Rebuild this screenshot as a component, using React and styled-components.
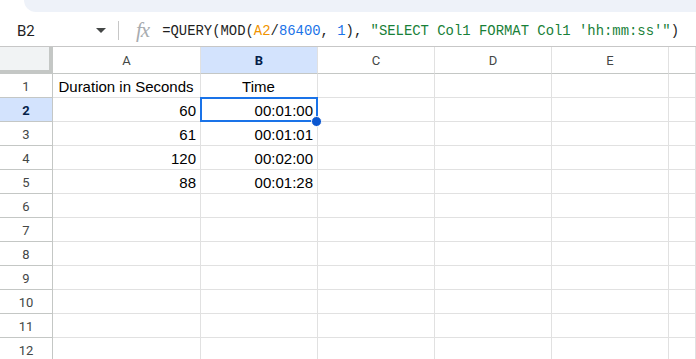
import React from "react";
import styled, { createGlobalStyle } from "styled-components";

const Global = createGlobalStyle`
  html, body { margin: 0; padding: 0; background: #fff; overflow: hidden; }
  * { box-sizing: border-box; }
`;

const Page = styled.div`
  width: 696px;
  height: 359px;
  display: flex;
  flex-direction: column;
  background: #fff;
  overflow: hidden;
  font-family: Roboto, "Liberation Sans", Arial, sans-serif;
`;

const ToolbarEdge = styled.div`
  height: 12px;
  margin-left: 24px;
  background: #eef2f9;
  border-bottom-left-radius: 14px;
  flex: none;
`;

const FormulaBar = styled.div`
  height: 35px;
  padding-top: 3px;
  display: flex;
  align-items: center;
  border-bottom: 1px solid #c7c7c7;
  flex: none;
`;

const NameBox = styled.div`
  width: 118px;
  display: flex;
  align-items: center;
  justify-content: space-between;
  padding: 0 12px 0 17px;
  font-size: 15px;
  color: #1f1f1f;
`;

const Caret = styled.span`
  width: 0;
  height: 0;
  border-left: 5px solid transparent;
  border-right: 5px solid transparent;
  border-top: 5px solid #444746;
`;

const Divider = styled.div`
  width: 1px;
  height: 19px;
  background: #c7c7c7;
  margin-right: 17px;
`;

const Fx = styled.span`
  font-family: "Liberation Serif", "DejaVu Serif", serif;
  font-style: italic;
  font-size: 21px;
  color: #a8acb0;
  margin-right: 13px;
  letter-spacing: -1px;
`;

const Formula = styled.div`
  font-family: "Liberation Mono", "DejaVu Sans Mono", monospace;
  font-size: 13.9px;
  color: #1f1f1f;
  white-space: pre;
`;

const Tok = styled.span`
  color: ${(p) => p.$c};
`;

const Grid = styled.div`
  display: grid;
  grid-template-columns: 53px 148px 117px 117px 117px 117px 1fr;
  grid-template-rows: 27px repeat(12, 24px);
  flex: none;
`;

const Cell = styled.div`
  position: relative;
  border-right: 1px solid #e1e1e1;
  border-bottom: 1px solid #e1e1e1;
  display: flex;
  align-items: center;
  justify-content: ${(p) => p.$align || "flex-start"};
  padding: 1px 4px 0 3px;
  font-family: "Liberation Sans", Arial, sans-serif;
  font-size: 15px;
  color: #000;
  white-space: nowrap;
`;

const Corner = styled.div`
  background: #f1f3f4;
  border-right: 4px solid #c4c7c5;
  border-bottom: 4px solid #c4c7c5;
`;

const ColHead = styled.div`
  display: flex;
  align-items: center;
  justify-content: center;
  padding-top: 1px;
  background: ${(p) => (p.$active ? "#d3e3fd" : "#fff")};
  border-right: 1px solid #e1e1e1;
  border-bottom: 1px solid #c4c7c5;
  font-family: Roboto, "Liberation Sans", Arial, sans-serif;
  font-size: 13px;
  font-weight: ${(p) => (p.$active ? 700 : 400)};
  color: ${(p) => (p.$active ? "#041e49" : "#444746")};
`;

const RowHead = styled.div`
  display: flex;
  align-items: center;
  justify-content: center;
  padding-top: 1px;
  background: ${(p) => (p.$active ? "#d3e3fd" : "#fff")};
  border-right: 1px solid #c4c7c5;
  border-bottom: 1px solid #c4c7c5;
  font-family: Roboto, "Liberation Sans", Arial, sans-serif;
  font-size: 13px;
  font-weight: ${(p) => (p.$active ? 700 : 400)};
  color: ${(p) => (p.$active ? "#041e49" : "#444746")};
`;

const Selection = styled.div`
  position: absolute;
  left: -1px;
  top: -1px;
  right: -1px;
  bottom: -1px;
  border: 2px solid #1a73e8;
  pointer-events: none;
  z-index: 2;
`;

const Handle = styled.div`
  position: absolute;
  right: -6px;
  bottom: -7px;
  width: 11px;
  height: 11px;
  border-radius: 50%;
  background: #0b57d0;
  border: 1px solid #fff;
  z-index: 3;
`;

const cols = ["A", "B", "C", "D", "E", ""];
const data = [
  ["Duration in Seconds", "Time"],
  ["60", "00:01:00"],
  ["61", "00:01:01"],
  ["120", "00:02:00"],
  ["88", "00:01:28"],
];

export default function App() {
  const rows = Array.from({ length: 12 }, (_, i) => i + 1);
  return (
    <Page>
      <Global />
      <ToolbarEdge />
      <FormulaBar>
        <NameBox>
          <span>B2</span>
          <Caret />
        </NameBox>
        <Divider />
        <Fx>fx</Fx>
        <Formula>
          =QUERY(MOD(<Tok $c="#f09300">A2</Tok>/<Tok $c="#1a73e8">86400</Tok>, <Tok $c="#1a73e8">1</Tok>), <Tok $c="#188038">"SELECT Col1 FORMAT Col1 'hh:mm:ss'"</Tok>)
        </Formula>
      </FormulaBar>
      <Grid>
        <Corner />
        {cols.map((c, i) => (
          <ColHead key={"h" + i} $active={c === "B"}>
            {c}
          </ColHead>
        ))}
        {rows.map((r) => (
          <React.Fragment key={r}>
            <RowHead $active={r === 2}>{r}</RowHead>
            {cols.map((c, ci) => {
              const row = data[r - 1];
              const val = row && ci < 2 ? row[ci] : "";
              const align = r === 1 ? "center" : "flex-end";
              const selected = r === 2 && ci === 1;
              return (
                <Cell key={c + ci} $align={align}>
                  {val}
                  {selected && (
                    <Selection>
                      <Handle />
                    </Selection>
                  )}
                </Cell>
              );
            })}
          </React.Fragment>
        ))}
      </Grid>
    </Page>
  );
}
